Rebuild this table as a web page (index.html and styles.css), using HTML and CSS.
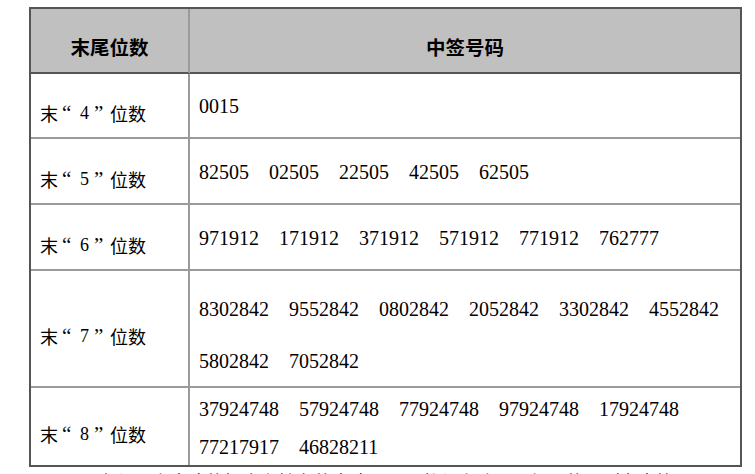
FILE: index.html
```html
<!DOCTYPE html>
<html lang="zh-CN">
<head>
<meta charset="utf-8">
<title>中签号码</title>
<link rel="stylesheet" href="styles.css">
</head>
<body>
<div class="table">
  <div class="cell head">末尾位数</div>
  <div class="cell head head-right">中签号码</div>

  <div class="cell label r1"><span class="c">末</span><span class="q1">“</span><span class="d">4</span><span class="q2">”</span><span class="c">位数</span></div>
  <div class="cell nums r1"><span>0015</span></div>

  <div class="cell label r2"><span class="c">末</span><span class="q1">“</span><span class="d">5</span><span class="q2">”</span><span class="c">位数</span></div>
  <div class="cell nums r2"><span>82505</span><span>02505</span><span>22505</span><span>42505</span><span>62505</span></div>

  <div class="cell label r3"><span class="c">末</span><span class="q1">“</span><span class="d">6</span><span class="q2">”</span><span class="c">位数</span></div>
  <div class="cell nums r3"><span>971912</span><span>171912</span><span>371912</span><span>571912</span><span>771912</span><span>762777</span></div>

  <div class="cell label r4"><span class="c">末</span><span class="q1">“</span><span class="d">7</span><span class="q2">”</span><span class="c">位数</span></div>
  <div class="cell nums r4"><span>8302842</span><span>9552842</span><span>0802842</span><span>2052842</span><span>3302842</span><span>4552842</span><span>5802842</span><span>7052842</span></div>

  <div class="cell label r5 last"><span class="c">末</span><span class="q1">“</span><span class="d">8</span><span class="q2">”</span><span class="c">位数</span></div>
  <div class="cell nums r5 last"><span>37924748</span><span>57924748</span><span>77924748</span><span>97924748</span><span>17924748</span><span>77217917</span><span>46828211</span></div>
</div>
<p class="note">凡参与网上申购的投资者持有的申购配号尾数与上述号码相同的，则为中签号码。</p>
</body>
</html>
```

FILE: styles.css
```css
html, body {
  margin: 0;
  padding: 0;
  background: #fff;
}
body {
  width: 755px;
  height: 474px;
  overflow: hidden;
  color: #000;
}
.table {
  margin: 7px 0 0 29px;
  width: 713px;
  box-sizing: border-box;
  display: grid;
  grid-template-columns: 159px 1fr;
  border: 2px solid #555;
}
.cell {
  box-sizing: border-box;
  border-bottom: 2px solid #9a9a9a;
  display: flex;
  align-items: center;
}
.cell.label {
  border-right: 2px solid #9a9a9a;
  font-family: "Noto Sans CJK SC", sans-serif;
  font-size: 18px;
  line-height: 24px;
  padding-left: 9px;
  padding-top: 15px;
}
.cell.last {
  border-bottom: none;
}
.head {
  background: #c0c0c0;
  height: 65px;
  border-bottom: 2px solid #555;
  justify-content: center;
  font-family: "Noto Sans CJK SC", sans-serif;
  font-weight: 700;
  font-size: 19.5px;
  line-height: 24px;
  padding-top: 13px;
}
.head:first-child {
  border-right: 2px solid #9a9a9a;
}
.label .c {
  display: inline-block;
}
.label .q1,
.label .q2,
.label .d {
  display: inline-block;
  box-sizing: border-box;
  font-family: "Liberation Serif", serif;
}
.label .q1 {
  width: 18px;
  padding-left: 4px;
  font-size: 21px;
}
.label .d {
  width: 18px;
  padding-left: 4px;
  font-size: 18px;
}
.label .q2 {
  width: 16px;
  font-size: 21px;
}
.nums {
  flex-wrap: wrap;
  align-content: center;
  column-gap: 20px;
  padding-left: 9px;
  font-family: "Liberation Serif", serif;
  font-size: 20px;
  line-height: 23px;
  padding-top: 2px;
}
.r1 { height: 65px; }
.r2 { height: 66px; }
.r3 { height: 66px; }
.r4 { height: 117px; }
.r5 { height: 77px; }
.nums.r4 {
  row-gap: 29px;
  padding-top: 14px;
}
.nums.r5 {
  row-gap: 15.5px;
  padding-top: 4px;
}
.note {
  margin: 2px 0 0 80px;
  font-family: "Noto Sans CJK SC", sans-serif;
  font-size: 18px;
  line-height: 24px;
  white-space: nowrap;
}
```
